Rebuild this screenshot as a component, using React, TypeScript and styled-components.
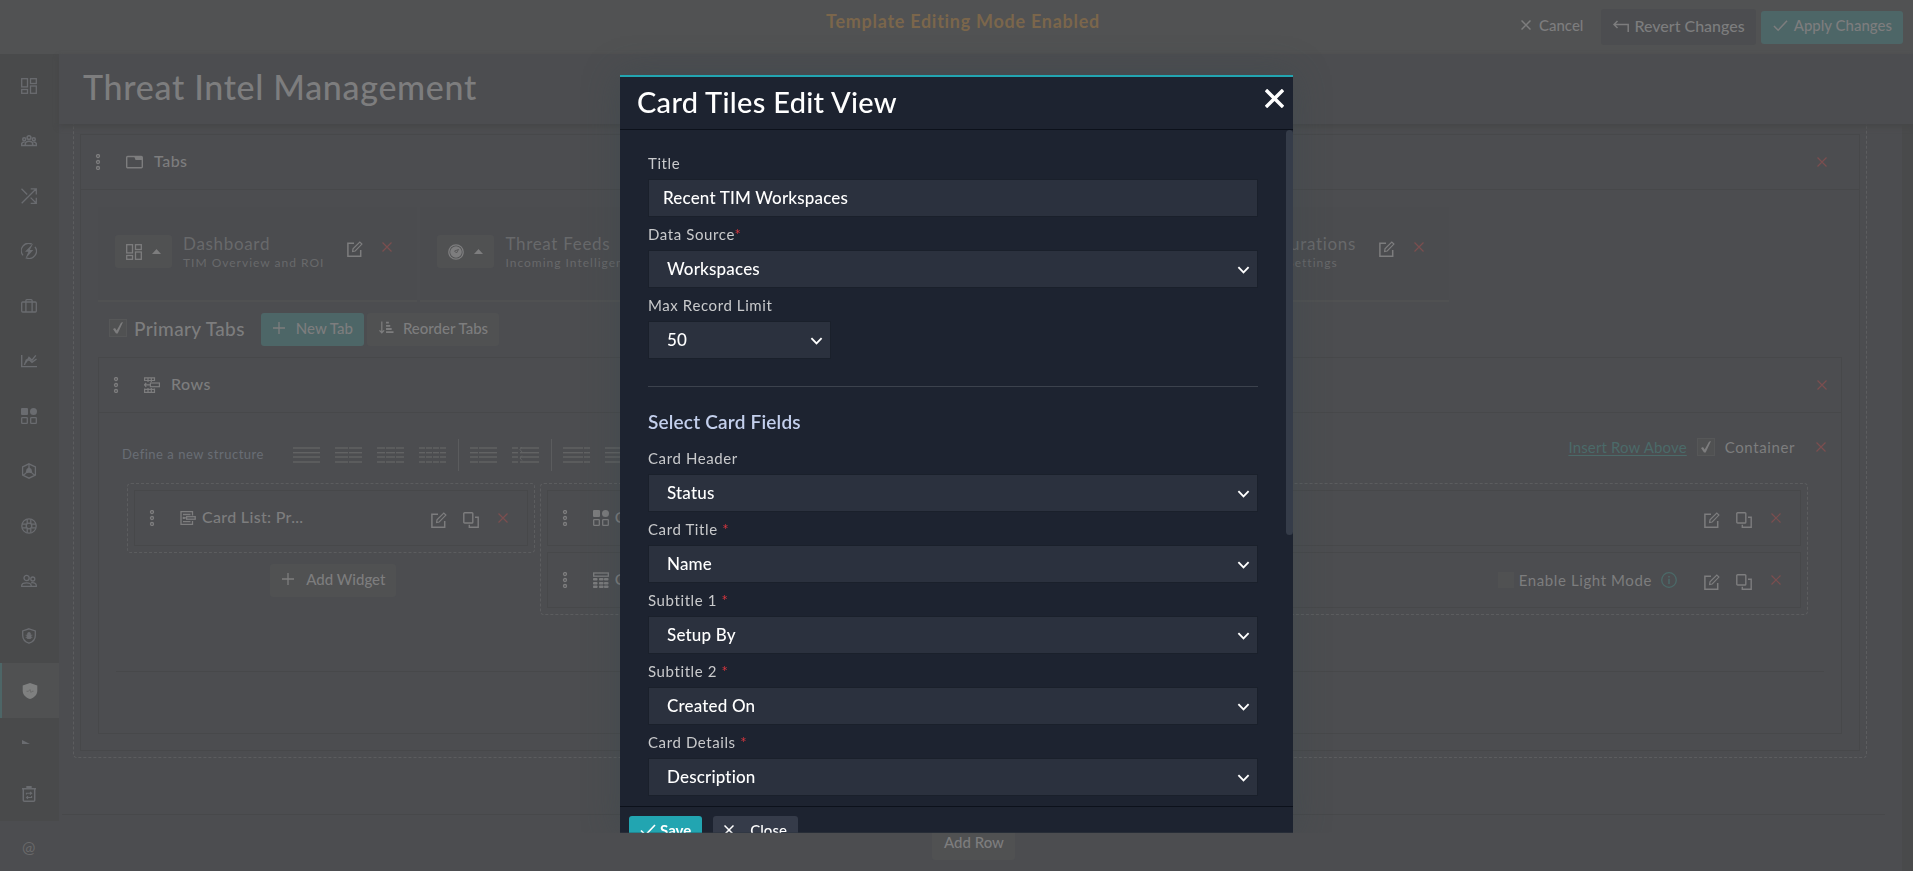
import React from "react";
import styled, { createGlobalStyle, css } from "styled-components";

const c = {
  page: "#4c4d50",
  bar: "#515253",
  side: "#494a4b",
  raised: "#505152",
  line: "#47484a",
  dash: "#5c5d5f",
  text: "#7d7d7e",
  muted: "#68696b",
  blueText: "#696d75",
  teal: "#4d6667",
  tealText: "#4b6a69",
  red: "#7b4e4f",
  modal: "#1d2330",
  field: "#2b313e",
  accent: "#22a5b1",
};

const Global = createGlobalStyle`
  *, *::before, *::after { box-sizing: border-box; }
  html, body { margin: 0; height: 100%; overflow: hidden; }
  body, button, input, select {
    font-family: Lato, "Open Sans", sans-serif;
    letter-spacing: 0.03em;
  }
  body { background: ${c.page}; color: ${c.text}; font-size: 16px; }
  #root { height: 100%; }
  svg { display: block; flex: none; }
  h1, h2, h3, p { margin: 0; font-weight: 500; }
`;

/* ---------- icons ---------- */

const Svg = ({ size = 16, children, width = 1.3, box = 16 }: {
  size?: number; children: React.ReactNode; width?: number; box?: number;
}) => (
  <svg width={size} height={size} viewBox={`0 0 ${box} ${box}`} fill="none" stroke="currentColor"
    strokeWidth={width} aria-hidden="true">{children}</svg>
);
const solid = { fill: "currentColor", stroke: "none" };

const DashboardIcon = () => (
  <Svg>
    <rect x="0.7" y="0.7" width="5.8" height="8.2" /><rect x="9.5" y="0.7" width="5.8" height="4.8" />
    <rect x="0.7" y="11.5" width="5.8" height="3.8" /><rect x="9.5" y="8" width="5.8" height="7.3" />
  </Svg>
);
const GroupIcon = () => (
  <Svg width={1.5}>
    <circle cx="8" cy="4.6" r="1.9" /><circle cx="3.2" cy="6.3" r="1.5" /><circle cx="12.8" cy="6.3" r="1.5" />
    <path d="M4.3 12.3V11C4.3 9.2 5.8 8.2 8 8.2s3.7 1 3.7 2.8v1.3M.6 12.3v-1.1C.6 9.8 1.7 9.1 3.6 9.1M15.4 12.3v-1.1c0-1.4-1.1-2.1-3-2.1M0 12.4h16" />
  </Svg>
);
const ShuffleIcon = () => (
  <Svg><path d="M.5.8 6.2 6.5M.7 15.3 15 1M9.6 9.6l5.2 5.2M9.7.8h5.6v5.6M15.3 9.7v5.6H9.7" /></Svg>
);
const BoltIcon = () => (
  <Svg>
    <path d="M10.8 1.1A7.3 7.3 0 0 0 2 12.3M5.2 14.8A7.3 7.3 0 0 0 14 3.8" />
    <path {...solid} d="M12.4 0 4 8.7h3.4L4.2 16 12.3 7H8.8z" />
  </Svg>
);
const CaseIcon = () => (
  <Svg><rect x="0.7" y="4" width="14.6" height="10" rx="1" /><path d="M4.9 14V2.6q0-1 1-1h4.2q1 0 1 1V14" /></Svg>
);
const ChartIcon = () => (
  <Svg width={1.4}><path d="M.7 2v11.6H16M3.4 12l2-5h3.2l2.4 2.4L15.5 6M5 9.5 8 4.4l3 2.8L14.8 2.4" /></Svg>
);
const AppsIcon = () => (
  <Svg>
    <rect {...solid} x="0" y="0" width="7" height="7" rx="1" /><circle {...solid} cx="12.5" cy="3.5" r="3.5" />
    <rect x="0.7" y="9.7" width="5.6" height="5.6" rx="0.6" /><rect x="9.7" y="9.7" width="5.6" height="5.6" rx="0.6" />
  </Svg>
);
const HexIcon = () => (
  <Svg>
    <path d="M8 .8 14.4 4v8L8 15.2 1.6 12V4z" /><path d="M8 1v4M2.3 12 5 10.2M13.7 12 11 10.2" />
    <path {...solid} d="M8 4.2 10.4 6l1.2 4.6L8 9.8l-3.6.8L5.6 6z" />
  </Svg>
);
const BuoyIcon = () => (
  <Svg>
    <circle cx="8" cy="8" r="7.2" /><circle cx="8" cy="8" r="2.8" />
    <path d="M6.2 1.2v4.2M9.8 1.2v4.2M6.2 10.6v4.2M9.8 10.6v4.2M1.2 6.2h4.2M1.2 9.8h4.2M10.6 6.2h4.2M10.6 9.8h4.2" />
  </Svg>
);
const PeopleIcon = () => (
  <Svg>
    <circle cx="5.6" cy="5" r="2.6" /><circle cx="11.8" cy="6" r="2" />
    <path d="M.7 13.4V12.6C.7 10.6 3 9.8 5.6 9.8s4.6.8 4.6 2.8v.8zM10 9.9c2.8-.6 5.3.4 5.3 2.5v1H10" />
  </Svg>
);
const ShieldBugIcon = () => (
  <Svg>
    <path d="M8 .8 14.3 3v4.5c0 4-2.6 6.5-6.3 7.7C4.3 14 1.7 11.5 1.7 7.5V3z" />
    <rect {...solid} x="5.6" y="6" width="4.8" height="5" rx="1.5" /><circle {...solid} cx="8" cy="5.6" r="1.7" />
    <path d="M4.6 7.2h6.8M4.6 9.6h6.8" strokeWidth="0.8" />
  </Svg>
);
const ShieldIcon = () => (
  <Svg>
    <path {...solid} d="M8 0 15.3 2.6v4.9c0 4.3-2.9 7.2-7.3 8.5C3.6 14.7.7 11.8.7 7.5V2.6z" />
    <path d="M4.5 8.3h2L8 6.5l1 3 1-1.2h1.5" stroke="#6c6c6c" strokeWidth="1" />
  </Svg>
);
const FlagIcon = () => <Svg size={16}><path {...solid} d="M1 6v4h8z" /></Svg>;
const BinIcon = () => (
  <Svg width={1.5}>
    <path d="M1 2.8h14M2.3 3v11.2q0 1 1 1h9.4q1 0 1-1V3" /><rect {...solid} x="5.3" y="0" width="5.4" height="2.6" />
    <path d="M5.4 8.4V7.3h4.7M10.6 10v1.5H5.7M9 5.9l1.7 1.4L9 8.7M7 10.1l-1.5 1.4L7 12.9" strokeWidth="1.1" />
  </Svg>
);
const HandleIcon = () => (
  <Svg><circle cx="8" cy="2" r="1.5" /><circle cx="8" cy="8" r="1.5" /><circle cx="8" cy="14" r="1.5" /></Svg>
);
const FolderIcon = () => (
  <svg width="17" height="14" viewBox="0 0 17 14" fill="none" stroke="currentColor" strokeWidth="1.4" aria-hidden="true">
    <rect x="0.7" y="1.5" width="15.6" height="11.3" rx="1" /><path {...solid} d="M8 1h8v4H9.5z" />
  </svg>
);
const RowsIcon = () => (
  <Svg width={1.2}>
    <path d="M.6 4V.8h9.9V4M4 .8V5M7.3.8V5M.6 3.5h9.9M.6 11.5v3.8h9.9v-3.8M4 11v4.3M7.3 11v4.3M.6 12.3h9.9M0 7.8h6M2.2 5.8.6 7.8l1.6 2" />
    <rect x="6.4" y="6" width="9" height="3.7" />
  </Svg>
);
const ListIcon = () => (
  <Svg width={1.3}>
    <path d="M12.5 5.5V1.7H1v12.6h11.5V11M3 4.5h7.5M3 11.7h7.5M3 7.8h3" />
    <rect x="6.6" y="6.7" width="8.6" height="2.5" /><circle {...solid} cx="3.8" cy="7.9" r="1.2" />
  </Svg>
);
const TableIcon = () => (
  <Svg>
    <rect x="0.7" y="1" width="14.6" height="3.2" />
    {[6, 10, 13.5].map((y) => [0, 6, 11].map((x) => (
      <rect key={`${x}-${y}`} {...solid} x={x} y={y} width="4.5" height="2.5" rx="0.8" />
    )))}
  </Svg>
);
const EditIcon = () => (
  <Svg width={1.5}>
    <path d="M7 2.2H.9v13h12.8V9" /><path d="M5.6 10.5 6 7.8 12.8 1l2.1 2.1L8.2 10z" strokeWidth="1.2" />
  </Svg>
);
const CopyIcon = () => (
  <Svg width={1.4}><rect x="0.8" y="0.8" width="9" height="10.2" rx="0.8" /><path d="M12 5.2h3.2v10H6.3v-2.5" /></Svg>
);
const CrossIcon = ({ size = 10, width = 1.2 }: { size?: number; width?: number }) => (
  <Svg size={size} box={10} width={width}><path d="M.5.5l9 9M9.5.5l-9 9" /></Svg>
);
const PlusIcon = () => <Svg size={12} box={12}><path d="M6 0v12M0 6h12" /></Svg>;
const CheckIcon = ({ size = 16 }: { size?: number }) => (
  <Svg size={size} width={1.6}><path d="M1 8.5 5.5 13 15 3" /></Svg>
);
const TickIcon = () => <Svg size={12} box={12}><path {...solid} d="M1 7l2-1 1.700 2.500L9 .8 11 0 5.700 11.500H4z" /></Svg>;
const RevertIcon = () => (
  <Svg width={1.5}><path d="M1 7.5h14.2V15M4.500 4 1 7.500 4.500 11" /></Svg>
);
const SortIcon = () => (
  <Svg size={15}>
    <path d="M3 1.5v12M.5 11 3 13.6 5.5 11" /><path strokeWidth="1.9" d="M7.5 2.8h3M7.5 6.2h4.5M7.5 9.6h6M7.5 13h8" />
  </Svg>
);
const RadarIcon = () => (
  <Svg><circle cx="8" cy="8" r="7.2" /><circle {...solid} cx="8" cy="8" r="5.8" />
    <path d="m10.500 5.500-4 1.500 2 2z" stroke={c.raised} strokeWidth="0.800" /></Svg>
);
const InfoIcon = () => (
  <Svg><circle cx="8" cy="8" r="7.3" /><path d="M8 6.8V12M8 4v1.6" strokeWidth="1.5" /></Svg>
);
const CaretIcon = () => <svg width="9" height="5" viewBox="0 0 9 5" aria-hidden="true"><path {...solid} d="M0 5 4.5 0 9 5z" /></svg>;
const ChevronIcon = () => (
  <svg width="13" height="8" viewBox="0 0 14 8" fill="none" stroke="#fff" strokeWidth="2" aria-hidden="true"><path d="m1.500 1 5.500 5.500L12.500 1" /></svg>
);

/* One row layout, drawn as text lines split into the given column spans. */
const StructureIcon = ({ spans, arrows }: { spans: [number, number][]; arrows?: boolean }) => (
  <svg width="27" height="16" viewBox="0 0 27 16" fill="none" stroke="currentColor" strokeWidth="1.4" aria-hidden="true">
    {[1, 5.7, 10, 15].map((y) => spans.map(([a, b]) => <line key={`${a}-${y}`} x1={a} x2={b} y1={y} y2={y} />))}
    {arrows && <path strokeWidth="1" d="M10 0 8 2.5l2 2.5M10 8.5 8 11l2 2.5" />}
  </svg>
);

/* ---------- top bar ---------- */

const Page = styled.div`
  display: flex;
  flex-direction: column;
  height: 100vh;
  overflow: hidden;
`;
const TopBar = styled.header`
  display: grid;
  grid-template-columns: 1fr auto 1fr;
  flex: none;
  height: 54px;
  padding-right: 10px;
  background: ${c.bar};
`;
const ModeNote = styled.p`
  grid-column: 2;
  padding: 9px 0 0 23px;
  color: #7b664b;
  font-size: 18px;
  font-weight: 700;
  line-height: 24px;
  letter-spacing: 0.04em;
`;
const TopActions = styled.div`
  display: flex;
  align-items: center;
  justify-content: flex-end;
  gap: 5px;
`;
const Button = styled.button<{ $tone?: "teal" | "plain" | "page" }>`
  display: inline-flex;
  align-items: center;
  justify-content: center;
  gap: 11px;
  height: 33px;
  padding: 0 11px 4px 12px;
  border: 0;
  border-radius: 3px;
  background: ${(p) => (p.$tone === "teal" ? c.teal : p.$tone === "page" ? c.page : p.$tone === "plain" ? "transparent" : c.raised)};
  color: ${c.text};
  font-size: 15px;
  font-weight: 500;
  letter-spacing: 0;
  white-space: nowrap;
`;
const CancelButton = styled(Button)`
  gap: 8px;
  padding-right: 13px;
`;
const RevertButton = styled(Button)`
  gap: 5px;
  height: 36px;
  font-size: 16px;
`;
const ApplyButton = styled(Button)`
  gap: 6px;
`;
const AddWidgetButton = styled(Button)`
  gap: 12px;
  margin-left: 5px;
`;
const ReorderButton = styled(Button)`
  gap: 9px;
`;

/* ---------- side navigation ---------- */

const Body = styled.div`
  display: flex;
  flex: 1;
  min-height: 0;
`;
const Sidebar = styled.nav`
  display: flex;
  flex-direction: column;
  flex: none;
  width: 59px;
`;
const NavList = styled.div`
  padding-top: 4px;
  background: ${c.side};
`;
const NavItem = styled.a<{ $active?: boolean; $short?: boolean }>`
  display: flex;
  align-items: center;
  justify-content: center;
  height: ${(p) => (p.$short ? 48 : 55)}px;
  padding-right: 1px;
  border-left: ${(p) => (p.$active ? `2px solid ${c.teal}` : "0")};
  background: ${(p) => (p.$active ? c.raised : "transparent")};
  color: ${(p) => (p.$active ? "#7f8080" : "#6a6c70")};
  text-decoration: none;
`;
const AtItem = styled(NavItem)`
  color: #69696a;
  font-size: 16px;
`;

/* ---------- main column ---------- */

const Main = styled.main`
  display: flex;
  flex-direction: column;
  flex: 1;
  min-width: 0;
`;
const PageHeader = styled.div`
  z-index: 1;
  flex: none;
  height: 70px;
  padding: 13px 24px;
  background: ${c.page};
  box-shadow: 0 3px 5px #464748;
`;
const PageTitle = styled.h1`
  color: ${c.text};
  font-size: 34px;
  font-weight: 500;
  line-height: 40px;
  letter-spacing: 0.02em;
`;
const Scroller = styled.div`
  display: flex;
  flex: 1;
  min-height: 0;
`;
const Track = styled.div`
  flex: none;
  width: 11px;
  background: ${c.side};
`;
const Canvas = styled.div`
  flex: 1;
  min-width: 0;
`;
const Frame = styled.section`
  margin: 0 35px 0 14px;
  padding: 10px 6px 6px;
  border: 1px dashed ${c.dash};
  border-top: 0;
  border-radius: 0 0 4px 4px;
`;
const Panel = styled.section`
  border: 1px solid ${c.line};
`;
const PanelHead = styled.div<{ $end: number }>`
  display: flex;
  align-items: center;
  height: 55px;
  padding: 0 ${(p) => p.$end}px 0 9px;
  border-bottom: 1px solid ${c.line};
`;
const PanelTitle = styled.h2`
  flex: 1;
  padding: 0 0 2px 11px;
  font-size: 16px;
  line-height: 20px;
`;
const HandleSlot = styled.span`
  width: 36px;
`;
const PanelBody = styled.div`
  padding: 17px 17px 16px;
`;
const IconButton = styled.button<{ $danger?: boolean }>`
  display: inline-flex;
  align-items: center;
  justify-content: center;
  width: 32px;
  height: 24px;
  padding: ${(p) => (p.$danger ? 0 : 4)}px 0 0;
  border: 0;
  background: none;
  color: ${(p) => (p.$danger ? c.red : c.text)};
`;
const TabStrip = styled.div`
  display: flex;
  gap: 3px;
  width: 79%;
  max-width: 1351px;
  min-width: 0;
`;
const TabCard = styled.div<{ $grow?: boolean }>`
  display: flex;
  align-items: flex-start;
  flex: ${(p) => (p.$grow ? "1" : "none")};
  height: 95px;
  padding: 28px 14px 0 17px;
  border-bottom: 2px solid ${c.raised};
  background: #4b4c4f;
`;
const GlyphPicker = styled.button`
  display: flex;
  align-items: center;
  justify-content: center;
  gap: 10px;
  width: 57px;
  height: 33px;
  border: 0;
  border-radius: 3px;
  background: ${c.raised};
  color: ${c.text};
`;
const TabText = styled.div`
  padding: 0 15px 0 11px;
  color: ${c.muted};
  white-space: nowrap;
`;
const TabName = styled.div`
  font-size: 17px;
  line-height: 17px;
  letter-spacing: 0.04em;
`;
const TabInfo = styled.div`
  padding-top: 1px;
  font-size: 12px;
  line-height: 20px;
  letter-spacing: 1px;
`;
const PrimaryRow = styled.div`
  display: flex;
  align-items: center;
  gap: 3px;
  height: 55px;
  padding-left: 11px;
`;
const CheckLabel = styled.label<{ $gap: number; $large?: boolean }>`
  display: inline-flex;
  align-items: center;
  gap: ${(p) => p.$gap}px;
  font-size: ${(p) => (p.$large ? 19 : 15)}px;
  font-weight: ${(p) => (p.$large ? 500 : 400)};
  letter-spacing: ${(p) => (p.$large ? "0.02em" : "0.04em")};
  white-space: nowrap;
`;
const PrimaryLabel = styled(CheckLabel)`
  padding: 0 13px 3px 0;
`;
const TickBox = styled.span`
  display: grid;
  place-items: center;
  width: 18px;
  height: 18px;
  background: ${c.raised};
  border: 1px solid #565758;
  & > * { grid-area: 1 / 1; }
`;
const PlainBox = styled.input`
  appearance: none;
  width: 16px;
  height: 16px;
  margin: 0;
  background: ${c.raised};
`;
const RowBlock = styled.div`
  margin: 0 17px 61px;
  padding: 0 16px 56px 11px;
  border-bottom: 1px solid ${c.line};
`;
const StructureRow = styled.div`
  display: flex;
  align-items: center;
  height: 70px;
  padding-top: 12px;
  margin: 0 -29px 0 -5px;
`;
const StructureHint = styled.span`
  width: 163px;
  color: ${c.blueText};
  font-size: 13px;
  letter-spacing: 0.04em;
  line-height: 20px;
`;
const Structures = styled.div`
  display: flex;
  align-items: center;
  padding-top: 2px;
  color: #626364;
`;
const StructureButton = styled.button`
  display: flex;
  padding: 8px 7px 8px 8px;
  border: 0;
  background: none;
  color: inherit;
`;
const Rule = styled.span`
  width: 1px;
  height: 32px;
  margin: 0 3px 0 5px;
  background: #5b5c5e;
`;
const RowTools = styled.div`
  display: flex;
  align-items: center;
  gap: 10px;
  margin-left: auto;
  padding-bottom: 15px;
  font-size: 15px;
`;
const RowLink = styled.a`
  color: ${c.tealText};
  letter-spacing: 0.01em;
  text-underline-offset: 2px;
`;
const Columns = styled.div`
  display: grid;
  grid-template-columns: minmax(0, 9fr) minmax(0, 28fr);
  gap: 5px;
  align-items: start;
`;
const ColumnCell = styled.div`
  display: flex;
  flex-direction: column;
  align-items: center;
  gap: 11px;
`;
const DropZone = styled.div`
  display: flex;
  flex-direction: column;
  gap: 6px;
  width: 100%;
  padding: 6px;
  border: 1px dashed ${c.dash};
  border-radius: 4px;
`;
const Widget = styled.div`
  display: flex;
  align-items: center;
  height: 56px;
  padding: 0 8px 0 9px;
  border: 1px solid ${c.line};
`;
const WidgetName = styled.span`
  flex: 1;
  min-width: 0;
  padding: 0 0 3px 6px;
  font-size: 16px;
  font-weight: 500;
  letter-spacing: 0.02em;
  white-space: nowrap;
`;
const LightMode = styled.span`
  display: inline-flex;
  align-items: center;
  gap: 9px;
  padding-right: 19px;
  & > svg { color: ${c.tealText}; }
`;
const AddRowBar = styled.div`
  display: flex;
  justify-content: center;
  margin: 56px 17px 0 3px;
  padding-top: 12px;
  border-top: 1px solid ${c.line};
`;

/* ---------- dialog ---------- */

const Overlay = styled.div`
  position: fixed;
  inset: 0;
  z-index: 10;
  display: flex;
  justify-content: center;
  align-items: flex-start;
  padding-top: 75px;
`;
const Dialog = styled.section`
  display: flex;
  flex-direction: column;
  width: 673px;
  height: 87vh;
  overflow: hidden;
  border-top: 2px solid ${c.accent};
  background: ${c.modal};
  color: #fff;
  box-shadow: 0 0 34px rgba(56, 72, 76, 0.45);
  clip-path: inset(-40px -40px 0 -40px);
`;
const DialogHead = styled.div`
  display: flex;
  justify-content: space-between;
  align-items: flex-start;
  flex: none;
  height: 53px;
  padding: 8px 9px 0 17px;
  border-bottom: 1px solid #0c111b;
`;
const DialogTitle = styled.h2`
  font-size: 29px;
  font-weight: 500;
  line-height: 34px;
  letter-spacing: 0.01em;
`;
const CloseButton = styled.button`
  padding: 4px 0;
  border: 0;
  background: none;
  color: #fff;
`;
const DialogBody = styled.div`
  display: flex;
  flex: 1;
  min-height: 0;
`;
const Form = styled.form`
  flex: 1;
  min-width: 0;
  overflow: hidden;
  padding: 16px 28px 0 28px;
`;
const Thumb = styled.div`
  flex: none;
  width: 7px;
  height: 60%;
  border-radius: 4px;
  background: #353c49;
`;
const Field = styled.div<{ $narrow?: boolean }>`
  width: ${(p) => (p.$narrow ? "30%" : "100%")};
`;
const Label = styled.label`
  display: block;
  padding-top: 2px;
  color: #c9cacc;
  font-size: 15px;
  line-height: 31px;
  letter-spacing: 0.04em;
  white-space: nowrap;
`;
const Star = styled.span`
  color: #d9363e;
`;
const control = css`
  display: block;
  width: 100%;
  height: 38px;
  border: 1px solid #1a202b;
  border-radius: 0;
  background: ${c.field};
  color: #fff;
  font-size: 17px;
  font-weight: 500;
  letter-spacing: 0.01em;
  outline: 0;
`;
const TextInput = styled.input`
  ${control}
  padding: 0 14px 2px;
`;
const SelectBox = styled.div`
  position: relative;
  & > svg { position: absolute; right: 8px; top: 16px; pointer-events: none; }
`;
const Select = styled.select`
  ${control}
  appearance: none;
  padding: 0 30px 2px 18px;
`;
const Separator = styled.hr`
  height: 1px;
  margin: 27px 0 25px;
  border: 0;
  background: #3c424d;
`;
const SectionTitle = styled.h3`
  padding-bottom: 9px;
  color: #c3cfec;
  font-size: 19px;
  font-weight: 600;
  line-height: 20px;
  letter-spacing: 0.01em;
`;
const DialogFoot = styled.div`
  display: flex;
  align-items: flex-start;
  gap: 11px;
  flex: none;
  height: 27px;
  padding: 9px 9px 0;
  overflow: hidden;
  border-top: 1px solid #0c111b;
`;
const FootButton = styled(Button)<{ $primary?: boolean }>`
  flex: none;
  gap: ${(p) => (p.$primary ? 4 : 16)}px;
  padding: 0 11px 4px;
  background: ${(p) => (p.$primary ? c.accent : "#353b49")};
  color: #fff;
  font-weight: ${(p) => (p.$primary ? 700 : 500)};
`;

const navIcons = [
  ["Dashboards", DashboardIcon], ["Teams", GroupIcon], ["Playbooks", ShuffleIcon], ["Triggers", BoltIcon],
  ["Cases", CaseIcon], ["Reports", ChartIcon], ["Applications", AppsIcon], ["Assets", HexIcon],
  ["Support", BuoyIcon], ["Users", PeopleIcon], ["Vulnerabilities", ShieldBugIcon], ["Threat Intel", ShieldIcon],
  ["Flags", FlagIcon], ["Recycle Bin", BinIcon],
] as const;

const structures: { spans: [number, number][]; rule?: boolean; arrows?: boolean }[] = [
  { spans: [[0, 27]] },
  { spans: [[0, 13], [14, 27]] },
  { spans: [[0, 8], [9, 18], [19, 27]] },
  { spans: [[0, 6], [7, 13], [14, 20], [21, 27]], rule: true },
  { spans: [[0, 8], [9, 27]] },
  { spans: [[0, 6], [8, 27]], rule: true, arrows: true },
  { spans: [[0, 20], [21, 27]] },
  { spans: [[0, 20], [22, 27]] },
];

const cardFields = [
  ["Card Header", "Status", false], ["Card Title", "Name", true], ["Subtitle 1", "Setup By", true],
  ["Subtitle 2", "Created On", true], ["Card Details", "Description", true],
] as const;

const SelectField = ({ id, label, value, star, narrow }: {
  id: string; label: string; value: string; star?: string; narrow?: boolean;
}) => (
  <Field $narrow={narrow}>
    <Label htmlFor={id}>{label}{star && <Star>{star}</Star>}</Label>
    <SelectBox>
      <Select id={id} defaultValue={value}><option>{value}</option></Select>
      <ChevronIcon />
    </SelectBox>
  </Field>
);

const Checked = ({ label, gap, large }: { label: string; gap: number; large?: boolean }) => {
  const Wrap = large ? PrimaryLabel : CheckLabel;
  return (
    <Wrap $gap={gap} $large={large}>
      <TickBox><PlainBox type="checkbox" defaultChecked /><TickIcon /></TickBox>
      {label}
    </Wrap>
  );
};

const Tab = ({ icon, name, info, grow }: { icon: React.ReactNode; name: string; info: string; grow?: boolean }) => (
  <TabCard $grow={grow}>
    <GlyphPicker aria-label="Choose icon">{icon}<CaretIcon /></GlyphPicker>
    <TabText><TabName>{name}</TabName><TabInfo>{info}</TabInfo></TabText>
    <IconButton aria-label="Edit tab"><EditIcon /></IconButton>
    <IconButton $danger aria-label="Remove tab"><CrossIcon /></IconButton>
  </TabCard>
);

const WidgetRow = ({ icon, name, children }: { icon: React.ReactNode; name: string; children?: React.ReactNode }) => (
  <Widget>
    <HandleSlot><HandleIcon /></HandleSlot>
    {icon}
    <WidgetName>{name}</WidgetName>
    {children}
    <IconButton aria-label="Edit widget"><EditIcon /></IconButton>
    <IconButton aria-label="Copy widget"><CopyIcon /></IconButton>
    <IconButton $danger aria-label="Remove widget"><CrossIcon /></IconButton>
  </Widget>
);

export default function App() {
  return (
    <>
      <Global />
      <Page>
        <TopBar>
          <ModeNote>Template Editing Mode Enabled</ModeNote>
          <TopActions>
            <CancelButton $tone="plain"><CrossIcon width={1.5} />Cancel</CancelButton>
            <RevertButton $tone="page"><RevertIcon />Revert Changes</RevertButton>
            <ApplyButton $tone="teal"><CheckIcon size={15} />Apply Changes</ApplyButton>
          </TopActions>
        </TopBar>
        <Body>
          <Sidebar>
            <NavList>
              {navIcons.map(([name, Icon]) => (
                <NavItem key={name} href="#" aria-label={name} $active={name === "Threat Intel"} $short={name === "Flags"}>
                  <Icon />
                </NavItem>
              ))}
            </NavList>
            <AtItem href="#">@</AtItem>
          </Sidebar>
          <Main>
            <PageHeader><PageTitle>Threat Intel Management</PageTitle></PageHeader>
            <Scroller>
              <Canvas>
                <Frame>
                  <Panel>
                    <PanelHead $end={21}>
                      <HandleSlot><HandleIcon /></HandleSlot>
                      <FolderIcon />
                      <PanelTitle>Tabs</PanelTitle>
                      <IconButton $danger aria-label="Remove tabs"><CrossIcon /></IconButton>
                    </PanelHead>
                    <PanelBody>
                      <TabStrip>
                        <Tab icon={<DashboardIcon />} name="Dashboard" info="TIM Overview and ROI" />
                        <Tab grow icon={<RadarIcon />} name="Threat Feeds" info="Incoming Intelligence" />
                        <Tab icon={<DashboardIcon />} name="Configurations" info="Module Settings" />
                      </TabStrip>
                      <PrimaryRow>
                        <Checked label="Primary Tabs" gap={7} large />
                        <Button $tone="teal"><PlusIcon />New Tab</Button>
                        <ReorderButton><SortIcon />Reorder Tabs</ReorderButton>
                      </PrimaryRow>
                      <Panel>
                        <PanelHead $end={3}>
                          <HandleSlot><HandleIcon /></HandleSlot>
                          <RowsIcon />
                          <PanelTitle>Rows</PanelTitle>
                          <IconButton $danger aria-label="Remove rows"><CrossIcon /></IconButton>
                        </PanelHead>
                        <RowBlock>
                          <StructureRow>
                            <StructureHint>Define a new structure</StructureHint>
                            <Structures>
                              {structures.map((s, i) => (
                                <React.Fragment key={i}>
                                  <StructureButton aria-label={`Layout ${i + 1}`}>
                                    <StructureIcon spans={s.spans} arrows={s.arrows} />
                                  </StructureButton>
                                  {s.rule && <Rule />}
                                </React.Fragment>
                              ))}
                            </Structures>
                            <RowTools>
                              <RowLink href="#">Insert Row Above</RowLink>
                              <Checked label="Container" gap={10} />
                              <IconButton $danger aria-label="Remove row"><CrossIcon /></IconButton>
                            </RowTools>
                          </StructureRow>
                          <Columns>
                            <ColumnCell>
                              <DropZone><WidgetRow icon={<ListIcon />} name="Card List: Pr..." /></DropZone>
                              <AddWidgetButton><PlusIcon />Add Widget</AddWidgetButton>
                            </ColumnCell>
                            <DropZone>
                              <WidgetRow icon={<AppsIcon />} name="Card Tiles" />
                              <WidgetRow icon={<TableIcon />} name="Card Table">
                                <LightMode>
                                  <CheckLabel $gap={5}><PlainBox type="checkbox" />Enable Light Mode</CheckLabel>
                                  <InfoIcon />
                                </LightMode>
                              </WidgetRow>
                            </DropZone>
                          </Columns>
                        </RowBlock>
                      </Panel>
                    </PanelBody>
                  </Panel>
                </Frame>
                <AddRowBar><Button>Add Row</Button></AddRowBar>
              </Canvas>
              <Track />
            </Scroller>
          </Main>
        </Body>
      </Page>
      <Overlay>
        <Dialog role="dialog" aria-labelledby="dialog-title">
          <DialogHead>
            <DialogTitle id="dialog-title">Card Tiles Edit View</DialogTitle>
            <CloseButton aria-label="Close dialog"><CrossIcon size={19} width={1.8} /></CloseButton>
          </DialogHead>
          <DialogBody>
            <Form>
              <Field>
                <Label htmlFor="title">Title</Label>
                <TextInput id="title" defaultValue="Recent TIM Workspaces" />
              </Field>
              <SelectField id="source" label="Data Source" star="*" value="Workspaces" />
              <SelectField id="limit" label="Max Record Limit" value="50" narrow />
              <Separator />
              <SectionTitle>Select Card Fields</SectionTitle>
              {cardFields.map(([label, value, required]) => (
                <SelectField key={label} id={label} label={label} value={value} star={required ? " *" : undefined} />
              ))}
            </Form>
            <Thumb />
          </DialogBody>
          <DialogFoot>
            <FootButton $primary><CheckIcon />Save</FootButton>
            <FootButton><CrossIcon width={1.5} />Close</FootButton>
          </DialogFoot>
        </Dialog>
      </Overlay>
    </>
  );
}
